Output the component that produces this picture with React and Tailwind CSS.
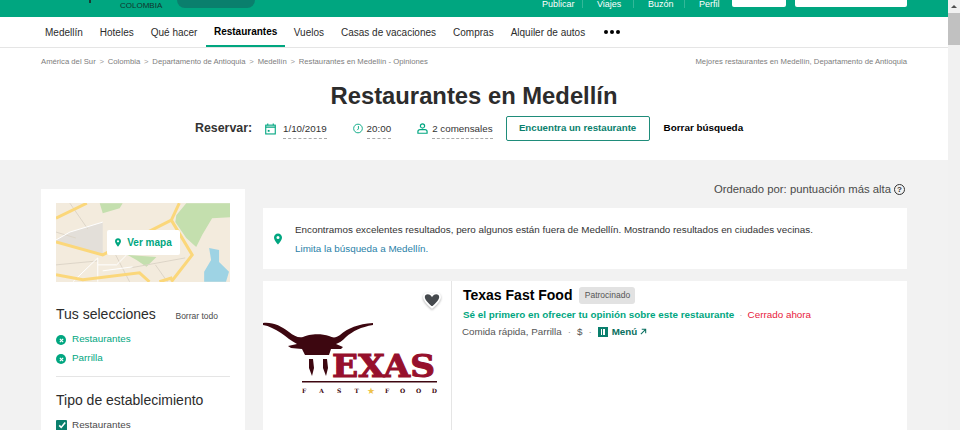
import React from 'react';

const navItems = ['Medellín', 'Hoteles', 'Qué hacer', 'Restaurantes', 'Vuelos', 'Casas de vacaciones', 'Compras', 'Alquiler de autos'];
const crumbs = ['América del Sur', 'Colombia', 'Departamento de Antioquia', 'Medellín', 'Restaurantes en Medellín - Opiniones'];

const Pin = ({ className }) => (
  <svg viewBox="0 0 10 14" className={className} fill="currentColor">
    <path fillRule="evenodd" d="M5 0C2.2 0 0 2.2 0 5c0 3.4 3.6 7.2 5 9 1.4-1.8 5-5.600 5-9 0-2.800-2.200-5-5-5zm0 3.200a1.900 1.900 0 1 1 0 3.800 1.900 1.900 0 0 1 0-3.800z" />
  </svg>
);

const Header = () => (
  <header className="h-[17px] bg-[#00a680] flex pr-[41px] overflow-hidden shrink-0">
    <div className="w-[89px]" />
    <div className="w-[2px] h-[3px] bg-[#1a3a34]" />
    <div className="ml-[29px] mt-[1px] text-[8px] leading-[9px] h-fit font-medium text-[#12352e]">COLOMBIA</div>
    <div className="ml-[15px] w-[78px] h-[8px] bg-[#0a7f6d] rounded-b-[10px]" />
    <div className="ml-auto flex text-[9px] text-white leading-[9px]">
      <span className="w-[42px] pl-px border-r border-[#33b899] h-[8px]">Publicar</span>
      <span className="w-[51px] pl-[14px] border-r border-[#33b899] h-[8px]">Viajes</span>
      <span className="w-[51px] pl-[14px] border-r border-[#33b899] h-[8px]">Buzón</span>
      <span className="w-[47px] pl-[14px]">Perfil</span>
    </div>
    <div className="w-[54px] h-[7px] bg-white rounded-b-[2px]" />
    <div className="ml-[9px] w-[112px] h-[7px] bg-white rounded-b-[2px]" />
  </header>
);

const Nav = () => (
  <nav className="h-[31px] border-b border-[#e5e5e5] flex pl-[36.5px] text-[10px] text-[#2c2c2c] shrink-0">
    {navItems.map(item => (
      <a
        key={item}
        className={item === 'Restaurantes'
          ? 'h-[30px] px-[8px] flex items-center font-bold text-black border-b-2 border-[#00a680]'
          : 'h-[30px] px-[8.5px] flex items-center'}
      >
        {item}
      </a>
    ))}
    <span className="ml-[10px] h-[30px] flex items-center gap-[1.5px]">
      <i className="w-[4.5px] h-[4.5px] rounded-full bg-black" />
      <i className="w-[4.5px] h-[4.5px] rounded-full bg-black" />
      <i className="w-[4.5px] h-[4.5px] rounded-full bg-black" />
    </span>
  </nav>
);

const Breadcrumbs = () => (
  <div className="flex justify-between items-center px-[41px] h-[28px] text-[7.7px] text-[#7d7d7d] shrink-0">
    <div className="flex items-center">
      {crumbs.map((c, i) => (
        <React.Fragment key={c}>
          {i > 0 && <span className="mx-[3.8px] text-[#999]">&gt;</span>}
          <span>{c}</span>
        </React.Fragment>
      ))}
    </div>
    <div>Mejores restaurantes en Medellín, Departamento de Antioquia</div>
  </div>
);

const DashedValue = ({ children }) => (
  <span className="block text-[9.8px] text-[#333] border-b border-dashed border-[#aaa] pt-[4px] pb-[3px] leading-[13px]">{children}</span>
);

const Hero = () => (
  <section className="bg-white h-[84px] shrink-0">
    <h1 className="text-center text-[23.8px] leading-[28px] font-bold text-[#2c2c2c] mt-[6px]">Restaurantes en Medellín</h1>
    <div className="flex items-center h-[25px] mt-[6px] pl-[195px]">
      <span className="text-[12.4px] font-bold text-[#333] w-[70px]">Reservar:</span>
      <svg viewBox="0 0 12 12" className="w-[11px] h-[12px] text-[#00a680]" fill="none" stroke="currentColor" strokeWidth="1.2">
        <rect x="0.8" y="1.8" width="10.4" height="9.6" />
        <path d="M0.8 4h10.4M3 0v2M9 0v2" />
        <rect x="3" y="7" width="2" height="2" fill="currentColor" stroke="none" />
      </svg>
      <span className="ml-[7px]"><DashedValue>1/10/2019</DashedValue></span>
      <svg viewBox="0 0 12 12" className="ml-[26px] w-[10px] h-[11px] text-[#00a680]" fill="none" stroke="currentColor" strokeWidth="1.1">
        <circle cx="6" cy="6" r="5.2" />
        <path d="M6.500 3v3.500L5 8" />
      </svg>
      <span className="ml-[4px]"><DashedValue>20:00</DashedValue></span>
      <svg viewBox="0 0 12 12" className="ml-[26px] w-[11px] h-[11px] text-[#00a680]" fill="none" stroke="currentColor" strokeWidth="1.3">
        <circle cx="6" cy="3.200" r="2.300" />
        <path d="M1 11.200V9.400C1 8 2.300 7.200 3.500 7.200h5C9.700 7.200 11 8 11 9.400v1.800z" />
      </svg>
      <span className="ml-[4px]"><DashedValue>2 comensales</DashedValue></span>
      <button className="ml-[13px] w-[144px] h-[25px] border border-[#1f8c7a] rounded-[2px] text-[9.7px] font-bold text-[#0a7f6d]">Encuentra un restaurante</button>
      <span className="ml-[14px] text-[9.9px] font-bold text-black">Borrar búsqueda</span>
    </div>
  </section>
);

const MapThumb = () => (
  <div className="relative h-[79px] bg-[#f3ebdd] overflow-hidden">
    <svg viewBox="0 0 175 79" className="w-full h-full">
      <path d="M44 0h23l-3 5-17 5zM121 12L131 0h44v14l-18 1-10 17-6 12-10-9-11-16zM72 52l29 2-10 10-10-7z" fill="#c4dfae" />
      <path d="M0 37l14-8 33-10v32L0 39z" fill="#e3dfd9" />
      <path d="M154 45l10 2v12l10 10-3 10h-22V69l7-12z" fill="#9ed3e4" />
      <path d="M0 29L20 35M14 0l18 26M0 62l42-4M60 52l14 27M100 62l12 17M75 65l55-10M125 33l12 19" fill="none" stroke="#ddd5c8" strokeWidth="1" />
      <path d="M0 37l14-8 33-10M42 55L17 79M42 55v24M71 52l-10 10H42M47 68l30-4" fill="none" stroke="#fff" strokeWidth="1" />
      <path d="M0 15L31 0M0 39l47 13 69-35 8-17M116 17l21 35-21 27M0 72l27 5 57-7 10 9M104 79l13-4" fill="none" stroke="#fbd77a" strokeWidth="3" />
    </svg>
    <div className="absolute left-[51px] top-[27px] w-[73px] h-[25px] bg-white rounded-[2px] flex items-center justify-center gap-[6px] text-[10px] font-bold text-[#00a680]">
      <Pin className="w-[6px] h-[9px]" />
      Ver mapa
    </div>
  </div>
);

const Selected = ({ children }) => (
  <div className="flex items-center h-[19px] text-[9.9px] text-[#00a680]">
    <span className="w-[10px] h-[10px] rounded-full bg-[#00a680] text-white flex items-center justify-center mt-[1px]">
      <svg viewBox="0 0 6 6" className="w-[5px] h-[5px]" stroke="currentColor" strokeWidth="1.4"><path d="M1 1l4 4M5 1L1 5" /></svg>
    </span>
    <span className="ml-[6px] mb-[1px]">{children}</span>
  </div>
);

const Sidebar = () => (
  <aside className="w-[204px] bg-white pt-[14px] px-[15px] h-[300px] mt-[9px] shrink-0">
    <MapThumb />
    <div className="flex items-baseline justify-between mt-[23px] pr-[12px]">
      <h3 className="text-[14px] leading-[18px] text-[#2c2c2c]">Tus selecciones</h3>
      <span className="text-[8.5px] text-[#4a4a4a]">Borrar todo</span>
    </div>
    <div className="mt-[7px]">
      <Selected>Restaurantes</Selected>
      <Selected>Parrilla</Selected>
    </div>
    <div className="border-t border-[#e5e5e5] mt-[8px]" />
    <h3 className="text-[14px] leading-[18px] text-[#2c2c2c] mt-[14px]">Tipo de establecimiento</h3>
    <div className="flex items-center mt-[9px] text-[9.9px] text-[#4a4a4a]">
      <span className="w-[11px] h-[11px] bg-[#0a7f6d] rounded-[1px] flex items-center justify-center">
        <svg viewBox="0 0 10 10" className="w-[8px] h-[8px]" fill="none" stroke="#fff" strokeWidth="2"><path d="M1.500 5.500l2.500 2.500 5-6" /></svg>
      </span>
      <span className="ml-[5px]">Restaurantes</span>
    </div>
  </aside>
);

const TexasLogo = () => (
  <svg viewBox="0 0 188 160" className="w-full h-full">
    <path d="M0 42C10 41 18 45 26 51C31 55 35 57 40 56C45 53 58 52 66 55C70 57 73 57 77 54C85 47 95 43 110 42L110 44C98 46 90 50 83 56C79 60 76 62 73 63L80 66L78 68L68 68L66 74L42 74L39 68L28 67L25 65L34 63C28 60 24 56 18 52C12 48 6 45 0 44Z" fill="#3d0710" />
    <path d="M46 78h4l1 9-2 8-3-8zM60 78h4l1 9-2 8-3-8z" fill="#3d0710" />
    <text x="69" y="96" fontFamily="'DejaVu Serif', serif" fontWeight="700" fontSize="31" fill="#96102c" stroke="#96102c" strokeWidth="1" textLength="103" lengthAdjust="spacingAndGlyphs">EXAS</text>
    <rect x="39" y="100" width="135" height="1.500" fill="#3d0710" />
    <text x="39" y="112" fontFamily="'DejaVu Serif', serif" fontWeight="700" fontSize="6" fill="#3d0710" textLength="57">FAST</text>
    <text x="104" y="113" fontSize="9" fill="#eec24a">★</text>
    <text x="122" y="112" fontFamily="'DejaVu Serif', serif" fontWeight="700" fontSize="6" fill="#3d0710" textLength="52">FOOD</text>
  </svg>
);

const ResultCard = () => (
  <article className="flex bg-white h-[160px] mt-[12px]">
    <div className="relative w-[189px] border-r border-[#e5e5e5] shrink-0">
      <TexasLogo />
      <svg viewBox="0 0 20 18" className="absolute left-[160px] top-[11px] w-[18px] h-[17px] drop-shadow-[0_1px_1px_rgba(0,0,0,0.3)] overflow-visible">
        <path d="M10 17C4 12 1 9 1 5.500 1 3 3 1 5.500 1 7.300 1 9 2 10 3.500 11 2 12.700 1 14.500 1 17 1 19 3 19 5.500 19 9 16 12 10 17z" fill="#45494d" stroke="#fff" strokeWidth="2" />
      </svg>
    </div>
    <div className="pl-[11px] pt-[6px]">
      <div className="flex items-center">
        <h2 className="text-[14px] leading-[17px] font-bold text-black">Texas Fast Food</h2>
        <span className="ml-[7px] h-[17px] w-[56px] flex items-center justify-center bg-[#e2e2e2] rounded-[3px] text-[8.5px] text-[#555]">Patrocinado</span>
      </div>
      <div className="flex items-center mt-[4px] text-[9.85px] leading-[14px]">
        <span className="font-bold text-[#00a680]">Sé el primero en ofrecer tu opinión sobre este restaurante</span>
        <span className="mx-[5px] text-[#bbb]">·</span>
        <span className="text-[#e8213c]">Cerrado ahora</span>
      </div>
      <div className="flex items-center mt-[2px] -ml-px text-[9.8px] leading-[15px] text-[#555]">
        <span>Comida rápida, Parrilla</span>
        <span className="mx-[6px] text-[#999]">·</span>
        <span>$</span>
        <span className="mx-[6px] text-[#999]">·</span>
        <span className="w-[10px] h-[10px] bg-[#0a7f6d] flex items-center justify-center gap-[1px]">
          <i className="w-[1.5px] h-[6px] bg-white" />
          <i className="w-[1.5px] h-[6px] bg-white" />
        </span>
        <span className="ml-[4px] font-bold text-[#0a6f60]">Menú</span>
        <svg viewBox="0 0 8 8" className="ml-[3px] w-[7px] h-[7px]" fill="none" stroke="#0a6f60" strokeWidth="1.2"><path d="M1 7l5.500-5.500M2 1.500h4.500V6" /></svg>
      </div>
    </div>
  </article>
);

const Results = () => (
  <div className="w-[644px]">
    <div className="flex justify-end items-center h-[19px] pr-[2px] text-[11.3px] text-[#4a4a4a]">
      Ordenado por: puntuación más alta
      <span className="ml-[3px] w-[11px] h-[11px] rounded-full border border-[#333] text-[8px] leading-[9px] text-center font-bold text-[#333]">?</span>
    </div>
    <div className="flex items-center bg-white h-[61px] mt-[9px] pl-[11px]">
      <Pin className="w-[8px] h-[12px] text-[#00a680] mt-[1px]" />
      <div className="ml-[13px] mt-[1px] text-[9.83px] leading-[19px]">
        <div className="text-[#333]">Encontramos excelentes resultados, pero algunos están fuera de Medellín. Mostrando resultados en ciudades vecinas.</div>
        <div className="text-[#2a7fa8]">Limita la búsqueda a Medellín.</div>
      </div>
    </div>
    <ResultCard />
  </div>
);

const Scrollbar = () => (
  <div className="w-[12px] bg-[#f1f1f1] shrink-0 flex flex-col items-center">
    <div className="h-[13px] flex items-center">
      <i className="border-x-[3px] border-x-transparent border-b-[3px] border-b-[#505050]" />
    </div>
    <div className="w-full h-[32px] bg-[#c1c1c1]" />
  </div>
);

export default function App() {
  return (
    <div className="flex h-[430px] overflow-hidden bg-white font-['Liberation_Sans',Arial,sans-serif]">
      <div className="flex-1 flex flex-col min-w-0">
        <Header />
        <Nav />
        <Breadcrumbs />
        <Hero />
        <main className="flex-1 min-h-0 bg-[#f2f2f2] flex gap-[18px] pl-[41px] pt-[20px]">
          <Sidebar />
          <Results />
        </main>
      </div>
      <Scrollbar />
    </div>
  );
}
